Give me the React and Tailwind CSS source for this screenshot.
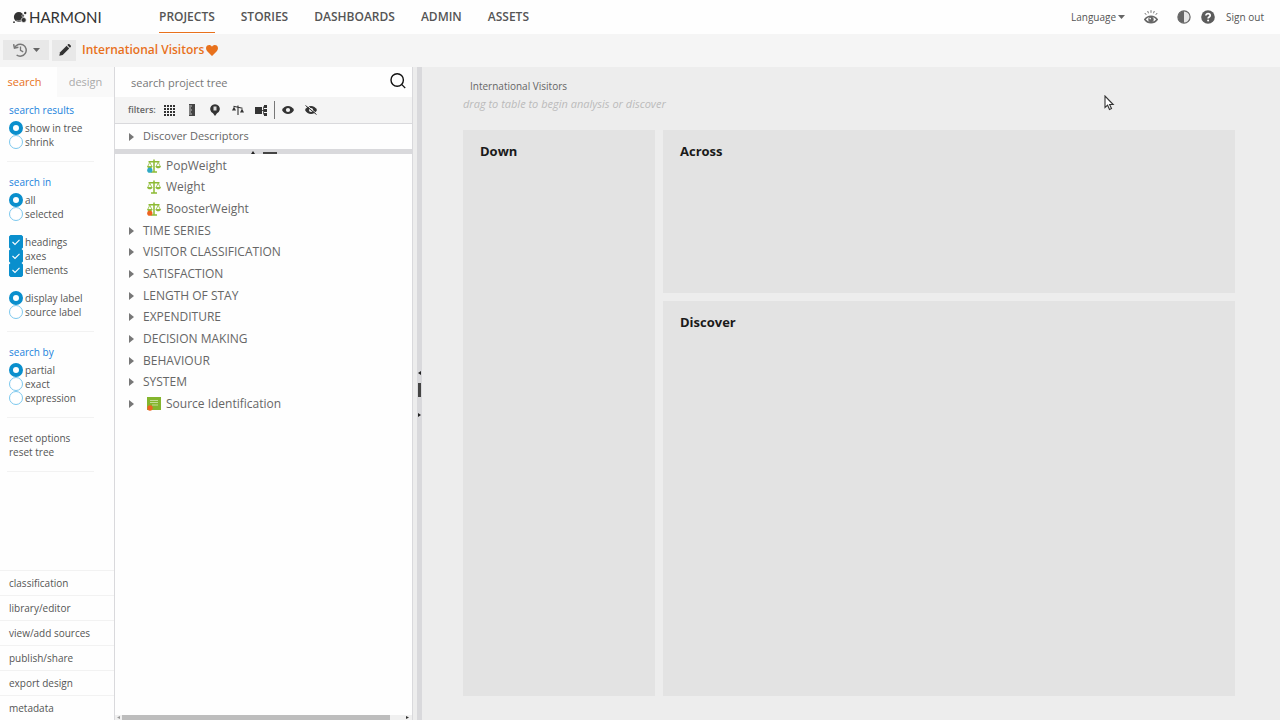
// App.jsx
import React, { useState } from "react";

const NAV = ["PROJECTS", "STORIES", "DASHBOARDS", "ADMIN", "ASSETS"];

const HEADINGS = [
  "TIME SERIES",
  "VISITOR CLASSIFICATION",
  "SATISFACTION",
  "LENGTH OF STAY",
  "EXPENDITURE",
  "DECISION MAKING",
  "BEHAVIOUR",
  "SYSTEM",
];

const WEIGHTS = [
  { label: "PopWeight", dot: "#2fa9c4" },
  { label: "Weight", dot: null },
  { label: "BoosterWeight", dot: "#ee6420" },
];

const MENU = [
  "classification",
  "library/editor",
  "view/add sources",
  "publish/share",
  "export design",
  "metadata",
];

function Logo() {
  return (
    <svg width="15" height="13" viewBox="0 0 15 13" fill="#333" aria-hidden="true">
      <circle cx="5.800" cy="6" r="4.900" />
      <circle cx="10.700" cy="9" r="2.500" stroke="#fff" strokeWidth="0.6" />
      <circle cx="12.200" cy="2" r="1.200" />
      <circle cx="10" cy="4.800" r="1.200" stroke="#fff" strokeWidth="0.5" />
      <circle cx="1" cy="11.200" r="0.9" />
      <path d="M3.500 9.300c1.200.9 3.200 1 4.400-.2" stroke="#fff" strokeWidth="0.600" fill="none" />
    </svg>
  );
}

function Caret() {
  return (
    <svg width="7" height="4" viewBox="0 0 7 4" fill="#666" aria-hidden="true">
      <path d="M0 0h7L3.500 4z" />
    </svg>
  );
}

function HistoryIcon() {
  return (
    <svg width="14" height="14" viewBox="0 0 14 14" fill="none" stroke="#777" strokeWidth="1.500" aria-hidden="true">
      <path d="M1.700 4.800A6 6 0 1 1 3.600 12" />
      <path d="M0.600 1.200l.9 3.900 3.900-.8" />
      <path d="M7.500 3.600v3.800l2.700 1.500" strokeWidth="1.300" />
    </svg>
  );
}

function PencilIcon() {
  return (
    <svg width="12" height="12" viewBox="0 0 12 12" fill="#333" aria-hidden="true">
      <path d="M0.300 11.700l.8-3.400L7.600 1.800l2.600 2.600-6.500 6.500z" />
      <path d="M8.300 1.100l.8-.8c.4-.4.900-.4 1.300 0l1.300 1.300c.4.4.4.900 0 1.300l-.8.8z" />
    </svg>
  );
}

function HeartIcon() {
  return (
    <svg width="12" height="11" viewBox="0 0 12 11" fill="#e8711c" aria-hidden="true">
      <path d="M6 11L1 5.900C-.5 4.200-.2 1.700 1.300.6 2.900-.5 5 .1 6 1.700 7-.1 9.100-.5 10.700.6c1.500 1.100 1.800 3.600.3 5.300z" />
    </svg>
  );
}

function BrightEyeIcon() {
  return (
    <svg width="14" height="14" viewBox="0 0 14 14" fill="none" stroke="#666" aria-hidden="true">
      <path d="M.8 9.500C3.800 5 10.200 5 13.200 9.500 10.200 13.800 3.800 13.800.8 9.500z" strokeWidth="1.500" />
      <circle cx="7" cy="9.400" r="2.700" fill="#666" stroke="none" />
      <circle cx="6.200" cy="8.600" r=".8" fill="#fff" stroke="none" />
      <path d="M.8 3l1.400 1.800M3.700 1l.8 2.300M7 .2v2.600M10.300 1l-.8 2.300M13.200 3l-1.400 1.800" strokeWidth=".9" />
    </svg>
  );
}

function ContrastIcon() {
  return (
    <svg width="14" height="14" viewBox="0 0 14 14" aria-hidden="true">
      <circle cx="7" cy="7" r="6.100" fill="#e6e6e6" stroke="#666" strokeWidth="1.200" />
      <path d="M7 1a6 6 0 0 0 0 12z" fill="#666" />
    </svg>
  );
}

function HelpIcon() {
  return (
    <svg width="14" height="14" viewBox="0 0 14 14" aria-hidden="true">
      <circle cx="7" cy="7" r="6.800" fill="#5c5c5c" />
      <path d="M4.900 5.500c0-2.600 4.300-2.500 4.300 0 0 1.500-2.100 1.500-2.100 3" fill="none" stroke="#fff" strokeWidth="1.700" />
      <circle cx="7.100" cy="10.500" r="1" fill="#fff" />
    </svg>
  );
}

function SearchIcon() {
  return (
    <svg width="16" height="16" viewBox="0 0 16 16" fill="none" stroke="#111" aria-hidden="true">
      <circle cx="7.200" cy="7" r="6.200" strokeWidth="1.400" />
      <path d="M11.600 11.400l3.600 3.600" strokeWidth="1.200" />
    </svg>
  );
}

function GridIcon() {
  return (
    <svg width="11" height="11" viewBox="0 0 11 11" stroke="#333" strokeWidth="2" strokeDasharray="2 1" aria-hidden="true">
      <path d="M0 1h11M0 4h11M0 7h11M0 10h11" />
    </svg>
  );
}

function RulerIcon() {
  return (
    <svg width="6" height="12" viewBox="0 0 6 12" aria-hidden="true">
      <path d="M0 0h6v12H0z" fill="#444" />
      <path d="M0 2h3M0 4h2M0 6h3M0 8h2M0 10h3" stroke="#ddd" strokeWidth=".8" />
    </svg>
  );
}

function PinIcon() {
  return (
    <svg width="10" height="12" viewBox="0 0 10 12" aria-hidden="true">
      <path d="M5 12L3 9.300A4.800 4.800 0 1 1 7 9.300z" fill="#333" />
      <path d="M3.500 2.500h3v4h-3z" fill="#ddd" />
    </svg>
  );
}

function TiltedScaleIcon() {
  return (
    <svg width="12" height="11" viewBox="0 0 12 11" fill="#333" aria-hidden="true">
      <path d="M1.500 1.200l9 2M6 .5v9.500" stroke="#333" strokeWidth="1.100" />
      <path d="M0 5.500l2-4 2 4zM8 7.500l2-4 2 4z" />
    </svg>
  );
}

function NodesIcon() {
  return (
    <svg width="12" height="11" viewBox="0 0 12 11" fill="#333" aria-hidden="true">
      <path d="M0 2h7v7H0zM9 0h3v3H9zM9 4h3v3H9zM9 8h3v3H9z" />
      <path d="M7 5.500h2M8.500 1.500v8" stroke="#333" strokeWidth=".8" />
    </svg>
  );
}

function EyeIcon({ off }) {
  return (
    <svg width="12" height="10" viewBox="0 0 12 10" fill="none" aria-hidden="true">
      <path d="M0 5C2.500-.3 9.500-.3 12 5 9.500 10.300 2.500 10.300 0 5z" fill="#333" />
      <circle cx="6" cy="5" r="2.100" fill="#f4f4f4" />
      {off && <path d="M1.600 0l10 8.800" stroke="#f4f4f4" strokeWidth="1" />}
      {off && <path d="M.5.5l11 9" stroke="#333" strokeWidth="1" />}
    </svg>
  );
}

function BalanceIcon({ dot }) {
  return (
    <svg width="14" height="14" viewBox="0 0 14 14" fill="#8dba33" aria-hidden="true">
      <path d="M7 .5v12M1.500 2.800h11M4 13h6" stroke="#8dba33" strokeWidth="1.500" />
      <path d="M2.800 3.200L.7 7.500h4.200zM11.200 3.200L9.100 7.500h4.200z" fill="none" stroke="#8dba33" strokeWidth=".8" />
      <path d="M0 7.300h5.600C5 10 .6 10 0 7.300zM8.400 7.300H14c-.6 2.700-5 2.700-5.600 0z" />
      {dot && <circle cx="2.800" cy="11.200" r="2.600" fill={dot} />}
    </svg>
  );
}

function SourceIcon() {
  return (
    <svg width="14" height="14" viewBox="0 0 14 14" aria-hidden="true">
      <path d="M0 0h14v13H0z" fill="#84b52d" />
      <path d="M3 3.500h8M3 5.500h8M5 8h6" stroke="#d5e6b3" strokeWidth=".8" />
      <circle cx="3" cy="11" r="2.700" fill="#ee6420" />
    </svg>
  );
}

function Arrow() {
  return (
    <svg width="5" height="8" viewBox="0 0 5 8" fill="#777" aria-hidden="true">
      <path d="M0 0l5 4-5 4z" />
    </svg>
  );
}

function Radio({ name, label, defaultChecked }) {
  return (
    <label className="flex h-3.5 items-center gap-0.5">
      <input
        type="radio"
        name={name}
        defaultChecked={defaultChecked}
        className="size-3.5 shrink-0 appearance-none rounded-full border border-[#7cc8ee] bg-white checked:border-4 checked:border-[#0a8fcd]"
      />
      {label}
    </label>
  );
}

function Check({ label }) {
  return (
    <label className="flex h-3.5 items-center gap-0.5">
      <span className="grid size-3.5 shrink-0">
        <input
          type="checkbox"
          defaultChecked
          className="peer col-start-1 row-start-1 size-3.5 appearance-none rounded-xs border border-[#0a8fcd] checked:bg-[#0a8fcd]"
        />
        <svg
          viewBox="0 0 14 14"
          className="pointer-events-none invisible col-start-1 row-start-1 size-3.5 peer-checked:visible"
          aria-hidden="true"
        >
          <path d="M3.500 7l2.500 2.500 4.500-4.700" fill="none" stroke="#fff" strokeWidth="1.100" />
        </svg>
      </span>
      {label}
    </label>
  );
}

function Header() {
  return (
    <header className="flex h-[34px] shrink-0 items-center bg-[#fefefe] pr-4 pl-[13px] text-[#555]">
      <a href="#home" className="flex w-[146px] items-center gap-px font-[Lato,sans-serif] text-[15px] leading-5 text-[#333]">
        <Logo />
        HARMONI
      </a>
      <nav className="flex h-full gap-[26px] text-xs font-semibold">
        {NAV.map((item, i) => (
          <a
            key={item}
            href={"#" + item.toLowerCase()}
            className={
              i === 0
                ? "flex h-[33px] items-center border-b border-[#e8711c] pt-0.5"
                : "flex h-[33px] items-center border-b border-transparent pt-0.5"
            }
          >
            {item}
          </a>
        ))}
      </nav>
      <div className="ml-auto flex items-center text-[10px] font-medium">
        <button className="mr-[19px] flex items-center gap-0.5">
          Language <Caret />
        </button>
        <button aria-label="View" className="mr-[19px]">
          <BrightEyeIcon />
        </button>
        <button aria-label="Contrast" className="mr-2.5">
          <ContrastIcon />
        </button>
        <button aria-label="Help" className="mr-[11px]">
          <HelpIcon />
        </button>
        <a href="#signout">Sign out</a>
      </div>
    </header>
  );
}

function ProjectBar() {
  return (
    <div className="flex h-[33px] shrink-0 items-center bg-[#f5f5f5] pb-px pl-[3px]">
      <button aria-label="History" className="flex h-5 w-[46px] items-center justify-center gap-1.5 bg-[#e8e8e8]">
        <HistoryIcon />
        <Caret />
      </button>
      <button aria-label="Edit" className="ml-[3px] flex h-[21px] w-6 items-center justify-center bg-[#e8e8e8] pl-0.5">
        <PencilIcon />
      </button>
      <h1 className="ml-1.5 flex items-center gap-0.5 text-xs font-semibold text-[#e8711c]">
        International Visitors <HeartIcon />
      </h1>
    </div>
  );
}

function SearchOptions() {
  const section = "mr-5 ml-[7px] border-b border-[#f2f2f2] pt-[13px] pb-3 pl-0.5";
  const title = "mb-1 text-[#1a82dc]";

  return (
    <aside className="flex w-[115px] shrink-0 flex-col border-r border-[#d9d9dc] bg-[#fefefe] text-[10px] leading-[14px] text-[#555]">
      <div className="grid h-[30px] shrink-0 grid-cols-2 text-[11px]">
        <button className="pr-2 text-[#e8711c]">search</button>
        <button className="bg-[#f9f9f9] text-[#aaa]">design</button>
      </div>

      <div className="mr-5 ml-[7px] border-b border-[#f2f2f2] pt-1.5 pb-3 pl-0.5">
        <h2 className={title}>search results</h2>
        <Radio name="results" label="show in tree" defaultChecked />
        <Radio name="results" label="shrink" />
      </div>

      <div className={section}>
        <h2 className={title}>search in</h2>
        <Radio name="scope" label="all" defaultChecked />
        <Radio name="scope" label="selected" />
        <div className="my-3.5">
          <Check label="headings" />
          <Check label="axes" />
          <Check label="elements" />
        </div>
        <Radio name="label" label="display label" defaultChecked />
        <Radio name="label" label="source label" />
      </div>

      <div className={section}>
        <h2 className={title}>search by</h2>
        <Radio name="by" label="partial" defaultChecked />
        <Radio name="by" label="exact" />
        <Radio name="by" label="expression" />
      </div>

      <div className={section}>
        <button className="block">reset options</button>
        <button className="block">reset tree</button>
      </div>

      <nav className="mt-auto">
        {MENU.map((item) => (
          <a
            key={item}
            href={"#" + item}
            className="flex h-[25px] items-center border-t border-[#f2f2f2] pl-[9px]"
          >
            {item}
          </a>
        ))}
      </nav>
    </aside>
  );
}

function ProjectTree() {
  const [query, setQuery] = useState("");

  return (
    <section className="flex w-[298px] shrink-0 flex-col border-r border-[#d9d9dc] bg-[#fefefe] text-xs text-[#666]">
      <div className="flex h-[30px] shrink-0 items-center pr-1.5 pl-4">
        <input
          value={query}
          onChange={(e) => setQuery(e.target.value)}
          placeholder="search project tree"
          aria-label="search project tree"
          className="min-w-0 flex-1 pt-0.5 text-[11px] outline-none placeholder:text-[#777]"
        />
        <button aria-label="Search" className="pb-0.5">
          <SearchIcon />
        </button>
      </div>

      <div className="flex h-[27px] shrink-0 items-center border-b border-[#d9d9dc] bg-[#f4f4f4] pl-[13px]">
        <span className="w-9 text-[9px] font-semibold">filters:</span>
        <button aria-label="Grid"><GridIcon /></button>
        <button aria-label="Measures" className="ml-3.5"><RulerIcon /></button>
        <button aria-label="Location" className="ml-[15px]"><PinIcon /></button>
        <button aria-label="Weights" className="ml-3"><TiltedScaleIcon /></button>
        <button aria-label="Nodes" className="ml-[11px]"><NodesIcon /></button>
        <span className="ml-[7px] h-[18px] w-px bg-[#777]" />
        <button aria-label="Show" className="ml-[7px]"><EyeIcon /></button>
        <button aria-label="Hide" className="ml-[11px]"><EyeIcon off /></button>
      </div>

      <button className="flex h-[25px] shrink-0 items-center gap-[9px] pl-3.5 text-[11px]">
        <Arrow />
        Discover Descriptors
      </button>

      <div className="flex h-[5px] shrink-0 items-end justify-center gap-2 bg-[#d9d9dc]">
        <svg width="4" height="3" viewBox="0 0 4 3" fill="#222" aria-hidden="true">
          <path d="M0 3l2-3 2 3z" />
        </svg>
        <span className="h-0.5 w-3.5 bg-[#444]" />
      </div>

      <ul className="mt-px grid h-[260px] shrink-0 auto-rows-fr">
        {WEIGHTS.map((w) => (
          <li key={w.label} className="flex items-center gap-[5px] pl-8">
            <BalanceIcon dot={w.dot} />
            {w.label}
          </li>
        ))}
        {HEADINGS.map((h) => (
          <li key={h} className="flex items-center gap-[9px] pl-3.5">
            <Arrow />
            {h}
          </li>
        ))}
        <li className="flex items-center pl-3.5">
          <Arrow />
          <span className="ml-[13px] flex items-center gap-[5px]">
            <SourceIcon />
            Source Identification
          </span>
        </li>
      </ul>

      <div className="mt-auto flex h-[5px] items-center bg-[#f0f0f0] pr-[3px] pl-0.5">
        <svg width="3" height="3" viewBox="0 0 3 3" fill="#999" aria-hidden="true">
          <path d="M3 0v3L0 1.500z" />
        </svg>
        <span className="ml-0.5 h-full w-[268px] bg-[#bdbdbd]" />
        <svg width="3" height="3" viewBox="0 0 3 3" fill="#333" className="ml-auto" aria-hidden="true">
          <path d="M0 0v3l3-1.500z" />
        </svg>
      </div>
    </section>
  );
}

function Splitter() {
  return (
    <div className="ml-1 flex w-[5px] shrink-0 flex-col items-center justify-center gap-2 bg-[#d9d9dc]">
      <svg width="3" height="4" viewBox="0 0 3 4" fill="#222" aria-hidden="true">
        <path d="M3 0v4L0 2z" />
      </svg>
      <span className="h-3.5 w-[3px] bg-[#444]" />
      <svg width="3" height="4" viewBox="0 0 3 4" fill="#222" className="mt-2" aria-hidden="true">
        <path d="M0 0v4l3-2z" />
      </svg>
    </div>
  );
}

function DropZone({ title, className }) {
  return (
    <section className={"bg-[#e3e3e3] px-[17px] py-3 " + className}>
      <h2 className="text-[13px] leading-[18px] font-bold text-[#1a1a1a]">{title}</h2>
    </section>
  );
}

function Analysis() {
  return (
    <main className="flex min-w-0 flex-1 flex-col pt-2.5 pr-[45px] pb-6 pl-[41px]">
      <p className="pl-[7px] text-[10px] leading-[18px] text-[#666]">International Visitors</p>
      <p className="text-[11px] leading-[18px] text-[#bbb] italic">
        drag to table to begin analysis or discover
      </p>
      <div className="mt-[17px] grid flex-1 grid-cols-[192px_1fr] grid-rows-[163px_1fr] gap-2">
        <DropZone title="Down" className="row-span-2" />
        <DropZone title="Across" className="" />
        <DropZone title="Discover" className="" />
      </div>
    </main>
  );
}

function Cursor() {
  return (
    <svg
      width="11"
      height="17"
      viewBox="0 0 11 17"
      className="pointer-events-none absolute top-[95px] right-[165px]"
      aria-hidden="true"
    >
      <path
        d="M1 1v11.500l2.600-2.300 1.900 4.300 2-.9-1.900-4.100H9.200z"
        fill="#fff"
        stroke="#333"
        strokeWidth="1.100"
      />
    </svg>
  );
}

export default function App() {
  return (
    <div className="relative flex h-screen flex-col overflow-hidden bg-[#ededed] font-['Open_Sans',sans-serif]">
      <Header />
      <ProjectBar />
      <div className="flex min-h-0 flex-1">
        <SearchOptions />
        <ProjectTree />
        <Splitter />
        <Analysis />
      </div>
      <Cursor />
    </div>
  );
}
